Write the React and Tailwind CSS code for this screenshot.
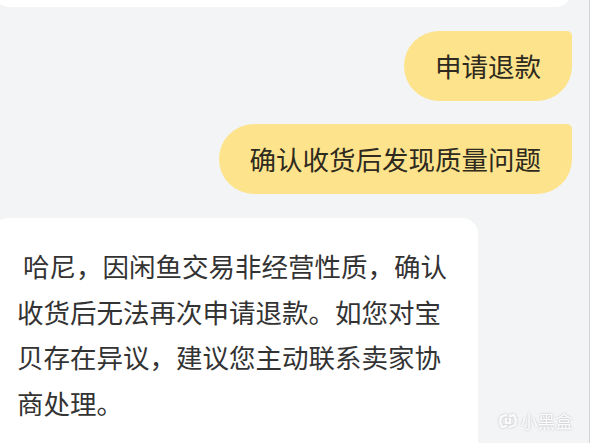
import React from "react";

const font = { fontFamily: '"Noto Sans CJK SC", "Noto Sans", sans-serif' };

const lines = [
  "\u00a0哈尼，因闲鱼交易非经营性质，确认",
  "收货后无法再次申请退款。如您对宝",
  "贝存在异议，建议您主动联系卖家协",
  "商处理。",
];

const MineBubble = ({ children }) => (
  <div className="self-end mr-[17px] rounded-[35px] rounded-tr-[5px] bg-[#fde38b] px-[31px] py-[17px] text-[26.5px] leading-[36px] text-[#2e2a20] whitespace-nowrap">
    {children}
  </div>
);

const Watermark = () => (
  <div className="absolute right-[16px] bottom-[14px] flex items-center gap-[3px] text-white/90 [filter:drop-shadow(0_0_1px_rgba(0,0,0,0.25))]">
    <svg width="20" height="16" viewBox="0 0 20 16" fill="none" stroke="currentColor" strokeWidth="2.4" strokeLinejoin="round" strokeLinecap="round">
      <path d="M8 2 L3 4 L2 9 L4 14 L8 13" />
      <path d="M12 3 L16 2 L18 7 L17 12 L12 14" />
      <path d="M8 6 L8 10 L12 10 M12 6 L12 10" />
    </svg>
    <span className="text-[17px] leading-none tracking-[0.5px]">小黑盒</span>
  </div>
);

export default function App() {
  return (
    <div className="relative h-[443px] w-[590px] overflow-hidden bg-[#f3f4f6] border-r border-[#d4d4d6]" style={font}>
      <div className="flex flex-col">
        <div className="-mt-[33px] -ml-[8px] h-[40px] w-[581px] rounded-[18px] bg-white" />

        <div className="mt-[24px] flex flex-col gap-[23px]">
          <MineBubble>申请退款</MineBubble>
          <MineBubble>确认收货后发现质量问题</MineBubble>
        </div>

        <div className="mt-[24px] -ml-[8px] w-[486px] h-[260px] rounded-[16px] bg-white pl-[25px] pt-[25px] text-[26.5px] leading-[45.5px] text-[#333333]">
          {lines.map((line) => (
            <div key={line} className="whitespace-nowrap">{line}</div>
          ))}
        </div>
      </div>
      <Watermark />
    </div>
  );
}
